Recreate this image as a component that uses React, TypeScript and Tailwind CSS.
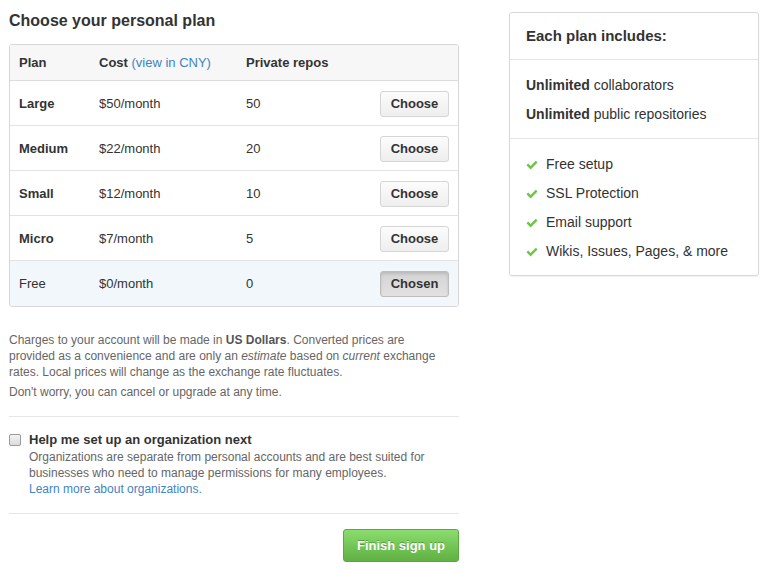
const plans = [
  { name: "Large", cost: "$50/month", repos: "50" },
  { name: "Medium", cost: "$22/month", repos: "20" },
  { name: "Small", cost: "$12/month", repos: "10" },
  { name: "Micro", cost: "$7/month", repos: "5" },
  { name: "Free", cost: "$0/month", repos: "0", chosen: true },
];

const features = ["Free setup", "SSL Protection", "Email support", "Wikis, Issues, Pages, & more"];

const Check = () => (
  <svg width="12" height="10" viewBox="0 0 12 10" className="shrink-0">
    <path d="M0.5 5.2 L2.2 3.6 L4.6 6 L9.8 0.8 L11.5 2.5 L4.6 9.4 Z" fill="#6cc644" />
  </svg>
);

export default function App() {
  return (
    <div className="min-h-[570px] bg-white font-['Liberation_Sans',Arial,sans-serif] text-[#333]">
      <div className="flex gap-[50px] pl-[9px]">
        <div className="w-[450px]">
          <h2 className="mt-[11px] mb-[13px] text-[16px] leading-[20px] font-bold">Choose your personal plan</h2>

          <div className="rounded-[3px] border border-[#d8d8d8] text-[13px] overflow-hidden">
            <div className="flex h-[36px] items-center bg-[#f7f7f7] border-b border-[#dcdcdc] font-bold">
              <div className="w-[89px] pl-[9px]">Plan</div>
              <div className="w-[147px]">
                Cost <span className="font-normal text-[#4183c4]">(view in CNY)</span>
              </div>
              <div>Private repos</div>
            </div>
            {plans.map((p, i) => (
              <div
                key={p.name}
                className={`flex h-[45px] items-center pt-[1px] ${i < plans.length - 1 ? "border-b border-[#e3e3e3]" : ""} ${p.chosen ? "bg-[#f1f7fb]" : "bg-white"}`}
              >
                <div className={`w-[89px] pl-[9px] ${p.chosen ? "" : "font-bold"}`}>{p.name}</div>
                <div className="w-[147px]">{p.cost}</div>
                <div className="flex-1">{p.repos}</div>
                <button
                  className={`mr-[9px] h-[26px] w-[69px] rounded-[3px] border font-bold text-[13px] ${
                    p.chosen
                      ? "border-[#bdbdbd] bg-gradient-to-b from-[#d4d4d4] to-[#e2e2e2] shadow-[inset_0_2px_3px_rgba(0,0,0,0.12)]"
                      : "border-[#d5d5d5] bg-gradient-to-b from-[#fcfcfc] to-[#eeeeee]"
                  }`}
                >
                  {p.chosen ? "Chosen" : "Choose"}
                </button>
              </div>
            ))}
          </div>

          <p className="mt-[25px] text-[12px] leading-[16px] text-[#666]">
            Charges to your account will be made in <strong className="text-[#555]">US Dollars</strong>. Converted prices are
            <br />
            provided as a convenience and are only an <em>estimate</em> based on <em>current</em> exchange
            <br />
            rates. Local prices will change as the exchange rate fluctuates.
          </p>
          <p className="mt-[4px] text-[12px] leading-[16px] text-[#666]">Don't worry, you can cancel or upgrade at any time.</p>

          <hr className="mt-[16px] border-0 border-t border-[#e5e5e5]" />

          <div className="mt-[15px] flex gap-[8px]">
            <span className="mt-[2px] h-[12px] w-[12px] shrink-0 rounded-[2px] border border-[#9a9a9a] bg-gradient-to-b from-[#f3f3f3] to-[#dcdcdc]" />
            <div>
              <div className="text-[13px] leading-[16px] font-bold">Help me set up an organization next</div>
              <div className="mt-[1px] text-[12px] leading-[16px] text-[#666]">
                Organizations are separate from personal accounts and are best suited for businesses who need to manage
                permissions for many employees.
                <br />
                <a className="text-[#4183c4]">Learn more about organizations.</a>
              </div>
            </div>
          </div>

          <hr className="mt-[16px] border-0 border-t border-[#e5e5e5]" />

          <div className="mt-[15px] flex justify-end">
            <button className="h-[33px] w-[116px] rounded-[3px] border border-[#5ca941] bg-gradient-to-b from-[#8add6d] to-[#60b044] text-[13px] font-bold text-white [text-shadow:0_-1px_0_rgba(0,0,0,0.25)]">
              Finish sign up
            </button>
          </div>
        </div>

        <div className="mt-[12px] w-[250px] self-start rounded-[3px] border border-[#d8d8d8] shadow-[0_1px_2px_rgba(0,0,0,0.06)]">
          <div className="flex h-[47px] items-center border-b border-[#e5e5e5] px-[16px] pt-[1px] text-[15px] font-bold">
            Each plan includes:
          </div>
          <div className="border-b border-[#e5e5e5] px-[16px] pt-[11px] pb-[9px] text-[14px] leading-[29px]">
            <div>
              <strong>Unlimited</strong> collaborators
            </div>
            <div>
              <strong>Unlimited</strong> public repositories
            </div>
          </div>
          <ul className="px-[16px] pt-[11px] pb-[9px] text-[14px] leading-[29px]">
            {features.map((f) => (
              <li key={f} className="flex items-center gap-[8px]">
                <Check />
                {f}
              </li>
            ))}
          </ul>
        </div>
      </div>
    </div>
  );
}
